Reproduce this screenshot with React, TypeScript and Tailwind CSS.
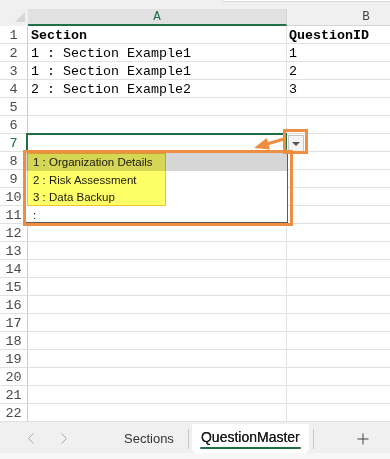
const mono = "font-['Liberation_Mono','DejaVu_Sans_Mono',monospace]";

type Row = { a: string; b: string; bold?: boolean };

const data: Row[] = [
  { a: "Section", b: "QuestionID", bold: true },
  { a: "1 : Section Example1", b: "1" },
  { a: "1 : Section Example1", b: "2" },
  { a: "2 : Section Example2", b: "3" },
];

const options = ["1 : Organization Details", "2 : Risk Assessment", "3 : Data Backup", ":"];

function GridRow({ n, row }: { n: number; row?: Row }) {
  const active = n === 7;
  return (
    <div className="flex h-[18px] shrink-0">
      <div
        className={`w-[28px] shrink-0 border-r border-b border-r-[#cdcdcd] border-b-[#e1e1e1] text-center text-[13.5px] leading-[19px] ${mono} ${
          active ? "text-[#1e7145]" : "text-[#4a4a4a]"
        }`}
      >
        {n}
      </div>
      <div
        className={`w-[259px] shrink-0 border-r border-b border-[#e1e1e1] pl-[3px] text-[13.33px] leading-[19px] text-black whitespace-pre ${mono} ${
          row?.bold ? "font-bold" : ""
        }`}
      >
        {row?.a}
      </div>
      <div
        className={`w-[158px] shrink-0 border-b border-[#e1e1e1] pl-[2px] text-[13.33px] leading-[19px] text-black ${mono} ${
          row?.bold ? "font-bold" : ""
        }`}
      >
        {row?.b}
      </div>
    </div>
  );
}

function Chevron({ dir }: { dir: "l" | "r" }) {
  return (
    <svg width="6" height="11" viewBox="0 0 6 11" className="shrink-0">
      <polyline
        points={dir === "l" ? "5.5,0.5 0.5,5.5 5.5,10.5" : "0.5,0.5 5.5,5.5 0.5,10.5"}
        fill="none"
        stroke="#a6a6a6"
        strokeWidth="1"
      />
    </svg>
  );
}

function TabBar() {
  const sans = "font-['Liberation_Sans',Arial,sans-serif]";
  return (
    <div className="flex flex-1 flex-col bg-[#f7f7f7]">
      <div className="h-[2px] bg-[#f0f0f0]" />
      <div className={`flex h-[29px] items-center bg-[#f0f0f0] pl-[28px] ${sans}`}>
        <Chevron dir="l" />
        <div className="ml-[27px]">
          <Chevron dir="r" />
        </div>
        <span className="ml-[57px] text-[13px] text-[#333]">Sections</span>
        <div className="ml-[14px] h-[20px] w-px bg-[#c9c9c9]" />
        <div className="ml-[3px] flex w-[117px] flex-col items-center justify-center gap-[2px] self-stretch rounded-b-[5px] bg-white">
          <span className="text-[14px] leading-[16px] text-[#1a1a1a] [text-shadow:0_0_0.3px_#1a1a1a]">QuestionMaster</span>
          <div className="h-[2px] w-[101px] rounded-full bg-[#1e7145]" />
        </div>
        <div className="ml-[4px] h-[20px] w-px bg-[#c9c9c9]" />
        <svg width="12" height="12" viewBox="0 0 12 12" className="ml-[43px]">
          <line x1="6" y1="0.5" x2="6" y2="11.5" stroke="#444" strokeWidth="1" />
          <line x1="0.5" y1="6" x2="11.5" y2="6" stroke="#444" strokeWidth="1" />
        </svg>
      </div>
    </div>
  );
}

export default function App() {
  const rows = Array.from({ length: 22 }, (_, i) => i + 1);
  return (
    <div className="relative flex h-[459px] w-[390px] flex-col overflow-hidden bg-white">
      {/* strip under formula bar */}
      <div className="flex h-[9px] shrink-0 bg-[#f0f0f0]">
        <div className="ml-[222px] h-[2px] flex-1 rounded-bl-[3px] border-b border-l border-[#d6d6d6] bg-white" />
      </div>

      {/* column headers */}
      <div className={`flex h-[17px] shrink-0 text-[12.5px] leading-[17px] ${mono}`}>
        <div className="relative w-[28px] shrink-0 bg-[#f0f0f0]">
          <div className="absolute right-[3px] bottom-[4px] h-0 w-0 border-b-[10px] border-l-[10px] border-b-[#d7d7d7] border-l-transparent" />
        </div>
        <div className="w-[259px] shrink-0 border-b-2 border-r border-r-[#d4d4d4] border-b-[#1e7145] bg-[#e1e1e1] text-center text-[#1e7145]">
          A
        </div>
        <div className="w-[158px] shrink-0 border-b border-[#d4d4d4] bg-[#f0f0f0] text-center text-[#444]">B</div>
      </div>

      {rows.map((n) => (
        <GridRow key={n} n={n} row={data[n - 1]} />
      ))}

      <TabBar />

      {/* selected cell A7 */}
      <div className="absolute left-[26px] top-[133px] h-[20px] w-[261px] border-2 border-[#1e6e42]" />

      {/* validation dropdown button */}
      <div className="absolute left-[288px] top-[135px] flex h-[17px] w-[16px] items-center justify-center border border-[#c6c6c6] bg-[#f4f4f4]">
        <div className="h-0 w-0 border-x-[4px] border-t-[4px] border-x-transparent border-t-[#555]" />
      </div>

      {/* dropdown list */}
      <div className="absolute left-[25px] top-[152px] h-[71px] w-[263px] border border-[#5c5c5c] bg-white font-['Liberation_Sans',Arial,sans-serif] text-[11.5px] text-[#1a1a1a]">
        {options.map((o, i) => (
          <div key={o} className={`h-[17.5px] pl-[7px] leading-[18.5px] ${i === 0 ? "bg-[#d6d6d6]" : ""}`}>
            {o}
          </div>
        ))}
      </div>

      {/* yellow highlight */}
      <div className="absolute left-[27px] top-[153px] h-[53px] w-[139px] border-[1.5px] border-[#f2c230] bg-[#ffff66] mix-blend-multiply" />

      {/* orange annotations */}
      <div className="absolute left-[23px] top-[150px] h-[76px] w-[270px] border-[3px] border-[#ee8e42]" />
      <div className="absolute left-[283px] top-[129px] h-[25px] w-[25px] border-[3px] border-[#ee8e42]" />
      <svg className="pointer-events-none absolute left-0 top-0" width="390" height="459">
        <line x1="284" y1="139" x2="267" y2="144" stroke="#ee8e42" strokeWidth="3" />
        <polygon points="254,148 270,149.4 266.7,137.9" fill="#ee8e42" />
      </svg>
    </div>
  );
}
